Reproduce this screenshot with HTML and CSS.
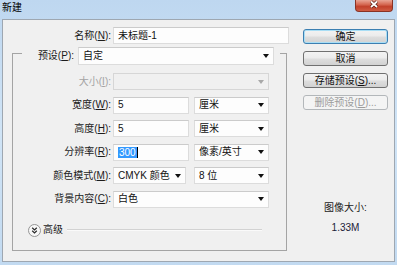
FILE: index.html
```html
<!DOCTYPE html>
<html lang="zh">
<head>
<meta charset="utf-8">
<link rel="stylesheet" href="styles.css">
</head>
<body>
<div class="window">
  <div class="titlebar">
    <span class="title">新建</span>
    <div class="close">
      <svg width="10" height="9" viewBox="0 0 10 9"><path d="M2 1.5l6 5.5M8 1.5l-6 5.5" stroke="#5a1d14" stroke-width="3.2"/><path d="M2 1.5l6 5.5M8 1.5l-6 5.5" stroke="#fff" stroke-width="1.7"/></svg>
    </div>
  </div>
  <div class="client">
    <div class="main">
      <div class="name-row">
        <span class="lbl name-lbl">名称(<u>N</u>):</span>
        <div class="field input w176">未标题-1</div>
      </div>
      <fieldset class="group">
        <legend class="preset">
          <div class="preset-row">
            <span class="lbl preset-lbl">预设(<u>P</u>):</span>
            <div class="field select w196">自定<i class="arrow"></i></div>
          </div>
        </legend>
        <div class="rows">
          <div class="row">
            <span class="lbl row-lbl off">大小(<u>I</u>):</span>
            <div class="field select disabled w156"><i class="arrow"></i></div>
          </div>
          <div class="row">
            <span class="lbl row-lbl">宽度(<u>W</u>):</span>
            <div class="field input w76">5</div>
            <div class="field select w75 gap5">厘米<i class="arrow"></i></div>
          </div>
          <div class="row">
            <span class="lbl row-lbl">高度(<u>H</u>):</span>
            <div class="field input w76">5</div>
            <div class="field select w75 gap5">厘米<i class="arrow"></i></div>
          </div>
          <div class="row">
            <span class="lbl row-lbl">分辨率(<u>R</u>):</span>
            <div class="field input w76"><span class="sel">300</span><span class="caret"></span></div>
            <div class="field select w75 gap5">像素/英寸<i class="arrow"></i></div>
          </div>
          <div class="row">
            <span class="lbl row-lbl">颜色模式(<u>M</u>):</span>
            <div class="field select w73">CMYK 颜色<i class="arrow"></i></div>
            <div class="field select w75 gap8">8 位<i class="arrow"></i></div>
          </div>
          <div class="row">
            <span class="lbl row-lbl">背景内容(<u>C</u>):</span>
            <div class="field select w156">白色<i class="arrow"></i></div>
          </div>
        </div>
        <div class="advanced">
          <svg class="chev" width="13" height="13" viewBox="0 0 13 13"><circle cx="6.5" cy="6.5" r="6" fill="#f8f8f8" stroke="#949494"/><path d="M4.2 3.8l2.3 2.2 2.3-2.2M4.2 6.8l2.3 2.2 2.3-2.2" fill="none" stroke="#2a2a2a" stroke-width="1.2"/></svg>
          <span class="adv-text">高级</span>
          <span class="adv-line"></span>
        </div>
      </fieldset>
    </div>
    <div class="side">
      <div class="btn default">确定</div>
      <div class="btn">取消</div>
      <div class="btn">存储预设(<u>S</u>)...</div>
      <div class="btn disabled">删除预设(<u>D</u>)...</div>
      <div class="size">
        <div class="size-line">图像大小:</div>
        <div class="size-line size-val">1.33M</div>
      </div>
    </div>
  </div>
</div>
</body>
</html>
```

FILE: styles.css
```css
* { box-sizing: border-box; margin: 0; padding: 0; }
html, body { width: 397px; height: 265px; overflow: hidden; }
body {
  font-family: "Liberation Sans", "Noto Sans CJK SC", sans-serif;
  font-size: 10px;
  color: #1b1b1b;
  background: #c6ddf3;
}
u { text-decoration: underline; text-underline-offset: 1px; }

.window {
  width: 397px;
  height: 265px;
  display: flex;
  flex-direction: column;
  background: linear-gradient(#bed7f0, #d0e4f6 50%, #c2daf1);
}
.titlebar {
  height: 19px;
  display: flex;
  align-items: flex-start;
}
.title {
  padding: 2px 0 0 2px;
  line-height: 12px;
  color: #000;
}
.close {
  margin-left: auto;
  margin-right: 4px;
  width: 38px;
  height: 12px;
  border: 1px solid #8a3325;
  border-top: none;
  border-radius: 0 0 4px 4px;
  background: linear-gradient(#e9a595, #d66a54 40%, #c2412b 60%, #cf5c43);
  display: flex;
  justify-content: center;
  align-items: flex-start;
  padding-top: 0;
}

.client {
  margin-left: 2px;
  width: 393px;
  height: 243px;
  border: 1px solid #9ea7b1;
  background: #f0f0f0;
  display: flex;
}
.main {
  width: 287px;
  padding-top: 7px;
  display: flex;
  flex-direction: column;
}
.lbl {
  line-height: 12px;
  white-space: nowrap;
  text-align: right;
}
.name-row {
  display: flex;
  align-items: center;
  height: 17px;
}
.name-lbl { width: 108px; margin-right: 2px; }

.field {
  height: 17px;
  display: flex;
  align-items: center;
  padding-left: 4px;
  line-height: 12px;
  white-space: nowrap;
  border: 1px solid #dcdcdc;
  border-top-color: #cbcbcb;
  background: #fdfdfd;
  color: #111;
}
.select { padding-right: 4px; }
.arrow {
  margin-left: auto;
  width: 0;
  height: 0;
  border-left: 3px solid transparent;
  border-right: 3px solid transparent;
  border-top: 4px solid #111;
}
.select.disabled { background: #f0f0f0; border-color: #d6d6d6; }
.select.disabled .arrow { border-top-color: #a8a8a8; }

.w176 { width: 176px; }
.w196 { width: 196px; height: 18px; }
.w156 { width: 156px; }
.w76 { width: 76px; }
.w75 { width: 75px; }
.w73 { width: 73px; }
.gap5 { margin-left: 5px; }
.gap8 { margin-left: 8px; }

.group {
  margin: -3px 0 0 9px;
  width: 275px;
  min-width: 0;
  border: 1px solid #a4a4a4;
  padding: 0 0 13px 0;
}
.preset {
  margin-left: 9px;
  padding: 6px 6px 0 12px;
}
.preset-row {
  display: flex;
  align-items: center;
}
.preset-lbl { width: 40px; margin-right: 4px; }

.rows {
  margin-top: 8px;
  display: flex;
  flex-direction: column;
  gap: 6.6px;
}
.row {
  display: flex;
  align-items: center;
  height: 17px;
}
.row-lbl { width: 98px; margin-right: 2px; }
.off { color: #a3a3a3; }

.sel {
  background: #3399ff;
  color: #fff;
  padding: 0 1px;
  line-height: 11px;
}
.caret {
  width: 1px;
  height: 11px;
  background: #000;
}

.advanced {
  margin-top: 16px;
  height: 13px;
  display: flex;
  align-items: center;
  padding-left: 15px;
}
.chev { flex: none; margin-right: 2px; }
.adv-text { line-height: 12px; margin-right: 4px; }
.adv-line {
  flex: 1;
  height: 2px;
  margin-right: 24px;
  background: #d2d2d2;
  border-bottom: 1px solid #fafafa;
}

.side {
  width: 85px;
  margin-left: 13px;
  padding-top: 9px;
  display: flex;
  flex-direction: column;
  gap: 7px;
}
.btn {
  height: 15px;
  border: 1px solid #707070;
  border-radius: 3px;
  background: linear-gradient(#f3f3f3, #ebebeb 48%, #dedede 52%, #d2d2d2);
  display: flex;
  align-items: center;
  justify-content: center;
  line-height: 12px;
  color: #111;
  white-space: nowrap;
}
.btn.default {
  border-color: #3c7fb1;
  box-shadow: inset 0 0 0 1px #a9def5;
}
.btn.disabled {
  border-color: #b3b7ba;
  background: #f4f4f4;
  color: #9c9c9c;
}
.size {
  margin-top: auto;
  padding-bottom: 27px;
  display: flex;
  flex-direction: column;
  gap: 8px;
  text-align: center;
}
.size-line { line-height: 12px; }
.size-val { color: #1c1c3a; }
```
